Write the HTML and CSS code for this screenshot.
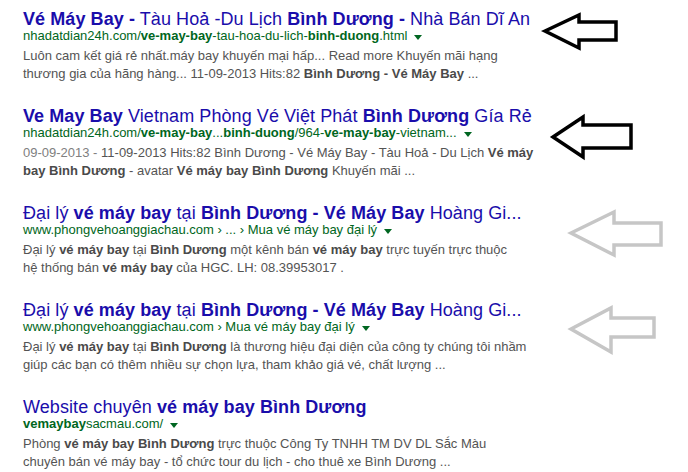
FILE: index.html
```html
<!DOCTYPE html>
<html lang="vi">
<head>
<meta charset="utf-8">
<title>Vé máy bay Bình Dương</title>
<link rel="stylesheet" href="styles.css">
</head>
<body>
<div class="page">
  <div class="results">
    <div class="g">
      <h3 class="r"><a href="#"><b>Vé Máy Bay -</b> Tàu Hoả -Du Lịch <b>Bình Dương -</b> Nhà Bán Dĩ An</a></h3>
      <div class="url"><cite>nhadatdian24h.com/<b>ve-may-bay</b>-tau-hoa-du-lich-<b>binh-duong</b>.html</cite><span class="caret"></span></div>
      <div class="st">Luôn cam kết giá rẻ nhất.máy bay khuyến mại hấp... Read more Khuyến mãi hạng<br>thương gia của hãng hàng... 11-09-2013 Hits:82 <b>Bình Dương - Vé Máy Bay</b> ...</div>
    </div>
    <div class="g">
      <h3 class="r"><a href="#"><b>Ve May Bay</b> Vietnam Phòng Vé Việt Phát <b>Bình Dương</b> Gía Rẻ</a></h3>
      <div class="url"><cite>nhadatdian24h.com/<b>ve-may-bay</b>...<b>binh-duong</b>/964-<b>ve-may-bay</b>-vietnam...</cite><span class="caret"></span></div>
      <div class="st"><span class="f">09-09-2013 - </span>11-09-2013 Hits:82 Bình Dương - Vé Máy Bay - Tàu Hoả - Du Lịch <b>Vé máy</b><br><b>bay Bình Dương</b> - avatar <b>Vé máy bay Bình Dương</b> Khuyến mãi ...</div>
    </div>
    <div class="g">
      <h3 class="r"><a href="#">Đại lý <b>vé máy bay</b> tại <b>Bình Dương - Vé Máy Bay</b> Hoàng Gi...</a></h3>
      <div class="url"><cite>www.phongvehoanggiachau.com › ... › Mua vé máy bay đại lý</cite><span class="caret"></span></div>
      <div class="st">Đại lý <b>vé máy bay</b> tại <b>Bình Dương</b> một kênh bán <b>vé máy bay</b> trực tuyến trực thuộc<br>hệ thống bán <b>vé máy bay</b> của HGC. LH: 08.39953017 .</div>
    </div>
    <div class="g">
      <h3 class="r"><a href="#">Đại lý <b>vé máy bay</b> tại <b>Bình Dương - Vé Máy Bay</b> Hoàng Gi...</a></h3>
      <div class="url"><cite>www.phongvehoanggiachau.com › Mua vé máy bay đại lý</cite><span class="caret"></span></div>
      <div class="st">Đại lý <b>vé máy bay</b> tại <b>Bình Dương</b> là thương hiệu đại diện của công ty chúng tôi nhầm<br>giúp các bạn có thêm nhiều sự chọn lựa, tham khảo giá vé, chất lượng ...</div>
    </div>
    <div class="g">
      <h3 class="r"><a href="#">Website chuyên <b>vé máy bay Bình Dương</b></a></h3>
      <div class="url"><cite><b>vemaybay</b>sacmau.com/</cite><span class="caret"></span></div>
      <div class="st">Phòng <b>vé máy bay Bình Dương</b> trực thuộc Công Ty TNHH TM DV DL Sắc Màu<br>chuyên bán vé máy bay - tổ chức tour du lịch - cho thuê xe Bình Dương ...</div>
    </div>
  </div>
  <svg class="arrows" width="688" height="472" viewBox="0 0 688 472" aria-hidden="true">
    <polygon class="dark" points="545,31 579,15 579,22 616,22 616,40 579,40 579,48"/>
    <polygon class="dark" points="553,137 583,117 583,125 631,125 631,148 583,148 583,157"/>
    <polygon class="light" points="571,233 614,212 614,223 661,223 661,245 614,245 614,255"/>
    <polygon class="light" points="571,329 611,308 611,318 654,318 654,337 611,337 611,352"/>
  </svg>
</div>
</body>
</html>
```

FILE: styles.css
```css
html, body {
  margin: 0;
  padding: 0;
  background: #ffffff;
}

.page {
  position: relative;
  width: 688px;
  height: 472px;
  overflow: hidden;
  font-family: "Liberation Sans", Arial, sans-serif;
}

.results {
  display: flex;
  flex-direction: column;
  gap: 24px;
  padding: 10px 0 0 23px;
}

.g {
  display: flex;
  flex-direction: column;
  white-space: nowrap;
}

.r {
  margin: 0;
  font-size: 18px;
  font-weight: normal;
  line-height: 19px;
  letter-spacing: 0.08px;
}

.r a {
  color: #1a0dab;
  text-decoration: none;
}

.r b {
  font-weight: bold;
}

.url {
  display: flex;
  align-items: center;
  height: 14px;
  font-size: 13px;
  line-height: 14px;
}

.url cite {
  font-style: normal;
  color: #006621;
}

.url cite b {
  font-weight: bold;
}

.caret {
  width: 0;
  height: 0;
  margin-left: 7px;
  margin-top: 2px;
  border-left: 4px solid transparent;
  border-right: 4px solid transparent;
  border-top: 5px solid #006621;
}

.st {
  margin-top: 4px;
  font-size: 13px;
  line-height: 18px;
  color: #545454;
}

.st b {
  color: #4a4a4a;
  font-weight: bold;
}

.st .f {
  color: #808080;
}

.arrows {
  position: absolute;
  left: 0;
  top: 0;
  pointer-events: none;
}

.arrows polygon {
  fill: none;
  stroke-linejoin: miter;
}

.arrows .dark {
  stroke: #000000;
  stroke-width: 3.5;
}

.arrows .light {
  stroke: #c6c6c6;
  stroke-width: 3.5;
}
```
